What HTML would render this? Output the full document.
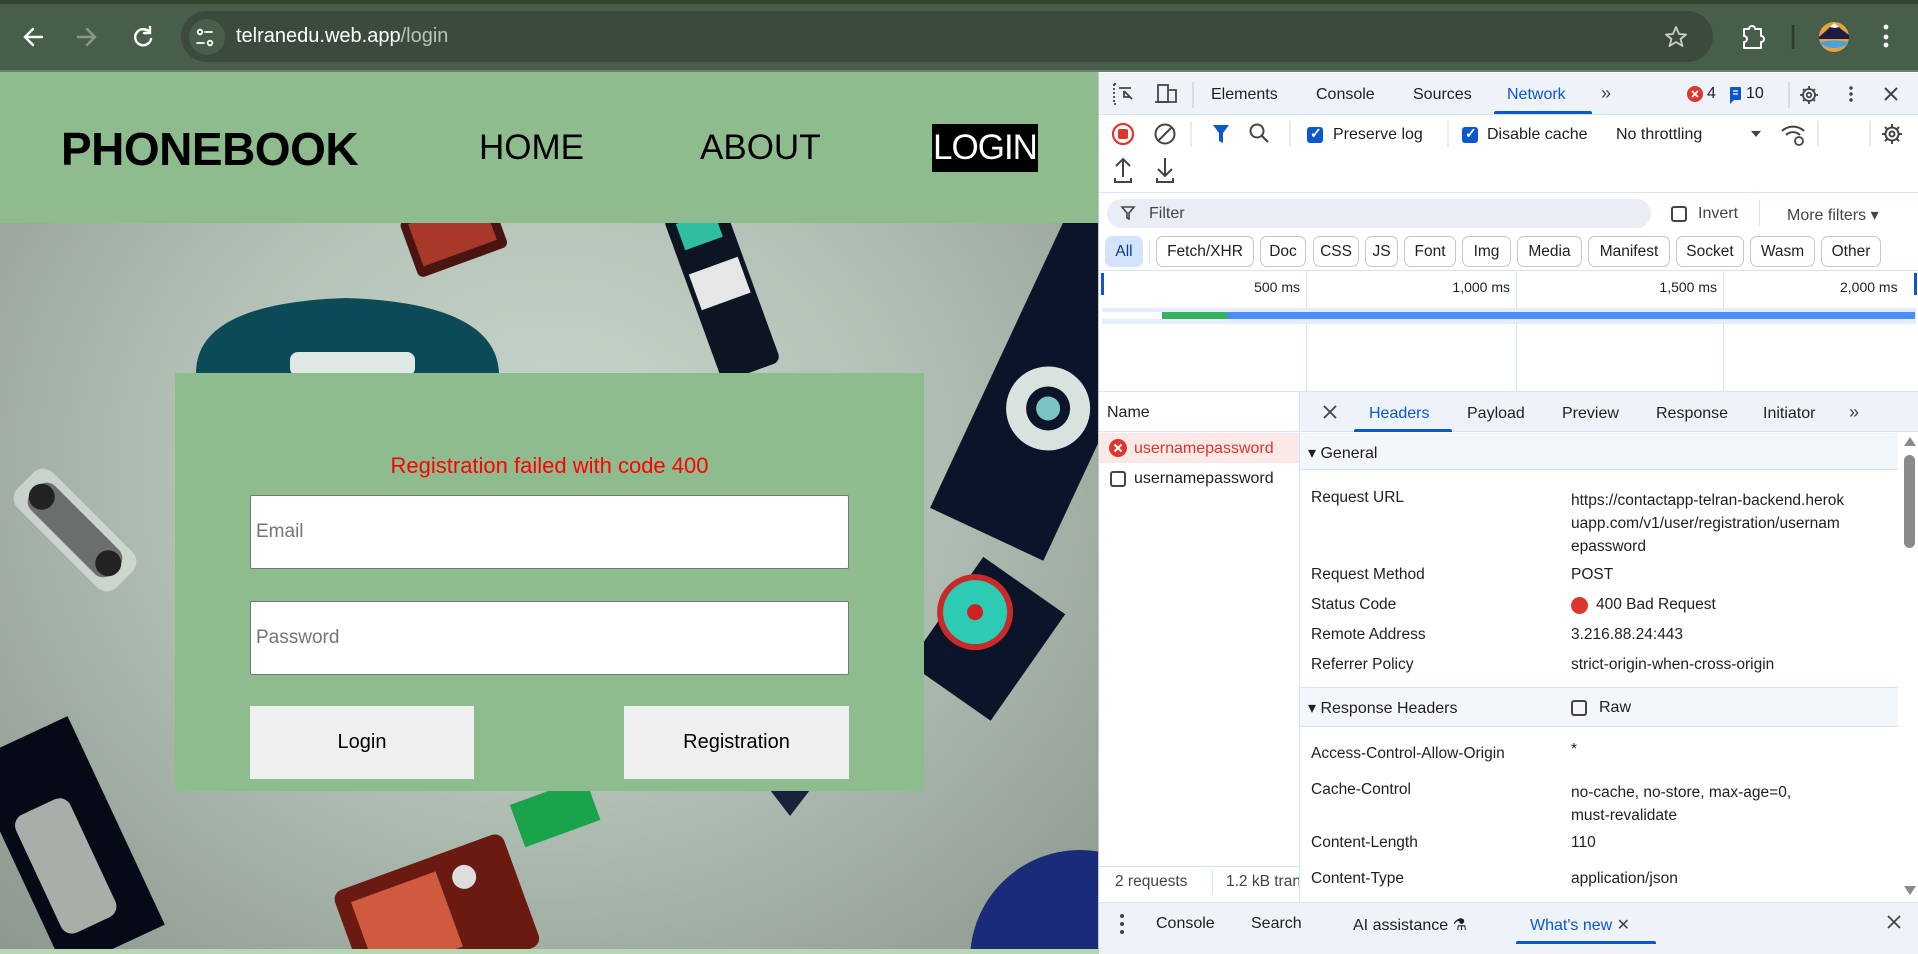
<!DOCTYPE html>
<html><head><meta charset="utf-8"><style>
*{box-sizing:border-box;margin:0;padding:0}
html{width:1918px;height:954px;overflow:hidden}
body{width:1918px;height:954px;overflow:hidden;position:relative;font-family:"Liberation Sans",sans-serif;background:#fff}
.a{position:absolute;white-space:nowrap}
.dt{font-size:16px;color:#1f1f1f}
.lbl{font-size:15.5px;color:#1f1f1f;font-weight:500}
.val{font-size:15.5px;color:#1f1f1f}
.chip{position:absolute;top:236px;height:31px;border:1px solid #c4c7c5;border-radius:7px;font-size:15.5px;line-height:29px;text-align:center;color:#1f1f1f}
.cb{position:absolute;width:16px;height:16px;border-radius:3px}
.cbon{background:#0b57d0}
.cboff{border:2px solid #444}
</style></head><body>
<div class="a" style="left:0;top:0;width:1918px;height:72px;background:#475f4a"></div>
<div class="a" style="left:0;top:0;width:1918px;height:4px;background:#34452f"></div>
<div class="a" style="left:0;top:70px;width:1918px;height:2px;background:#6b7f6d"></div>
<div class="a" style="left:181px;top:11px;width:1532px;height:51px;border-radius:26px;background:#3b4a3d"></div>
<div class="a" style="left:189px;top:19px;width:36px;height:36px;border-radius:18px;background:#475f4a"></div>
<svg class="a" style="left:0;top:0" width="1918" height="72">
<g stroke="#fff" stroke-width="2.4" fill="none" stroke-linecap="round">
<path d="M42 37H25M33 29l-8 8 8 8"/>
<path d="M78 37h17M87 29l8 8-8 8" stroke="#8a9a8c"/>
<path d="M150 33a8 8 0 1 0 1 6M150 27v6h-6"/>
<circle cx="200" cy="32" r="2.3" stroke-width="1.8"/><path d="M205 32h7M197 43h7" stroke-width="1.8"/><circle cx="210" cy="43" r="2.3" stroke-width="1.8"/>
<path d="M1676 27l3 7 7 .5-5.5 4.5 2 7-6.5-4-6.5 4 2-7-5.5-4.5 7-.5z" stroke="#c8d0c9" stroke-width="1.8" stroke-linejoin="round"/>
<path d="M1744 29h5a3 3 0 0 1 6 0h6v7a3 3 0 0 1 0 6v6h-17v-6a3 3 0 0 0 0-6z" stroke-width="2" stroke-linejoin="round"/>
</g>
<path d="M1793 25v24" stroke="#2c3a2d" stroke-width="2.5"/>
<circle cx="1834" cy="37" r="15" fill="#e9a23b"/><path d="M1819 37l9-8 6-6 7 6 8 6v4h-30z" fill="#1c1d45"/><path d="M1830 27l4-4 5 4-4 1z" fill="#fff"/><path d="M1820 42q14-3 28 0v2q-14 8-28 0z" fill="#4aa2dc"/>
<g fill="#fff"><circle cx="1886" cy="27" r="2.4"/><circle cx="1886" cy="37" r="2.4"/><circle cx="1886" cy="45" r="2.4"/></g>
</svg>
<div class="a" style="left:236px;top:25px;font-size:20px;color:#fff">telranedu.web.app<span style="color:#b8c2b9">/login</span></div>

<div class="a" style="left:0;top:72px;width:1098px;height:882px;overflow:hidden;background:radial-gradient(ellipse at 50% 45%,#c9d7cc 0%,#b3c1b6 45%,#8c978e 100%)">
 <svg class="a" style="left:0;top:0" width="1098" height="882">
  <g transform="translate(0,-72)">
  <g transform="rotate(-20 453 245)"><rect x="410" y="205" width="95" height="60" rx="6" fill="#4a1511"/><rect x="418" y="210" width="78" height="45" fill="#a8392a"/></g>
  <g transform="rotate(-20 730 300)"><rect x="695" y="200" width="62" height="175" rx="8" fill="#0d1424"/><rect x="705" y="210" width="40" height="28" fill="#2fbf9e"/><rect x="700" y="262" width="52" height="38" fill="#e6e6e6"/></g>
  <path d="M196 373q0-70 150-75q150 5 153 75z" fill="#0d4a58"/>
  <rect x="290" y="352" width="125" height="24" rx="8" fill="#dfe8e3"/>
  <g transform="rotate(25 1030 400)"><rect x="985" y="210" width="125" height="330" fill="#0b1428"/><circle cx="1050" cy="400" r="42" fill="#d8e2de"/><circle cx="1050" cy="400" r="22" fill="#0b1428"/><circle cx="1050" cy="400" r="12" fill="#7ac4c4"/></g>
  <g transform="rotate(35 980 640)"><rect x="935" y="570" width="100" height="130" fill="#0b1428"/><circle cx="960" cy="620" r="38" fill="#c82a2a"/><circle cx="960" cy="620" r="32" fill="#2ecbb4"/><circle cx="960" cy="620" r="8" fill="#d02020"/></g>
  <g transform="rotate(45 75 530)"><rect x="5" y="505" width="140" height="50" rx="14" fill="#e4e7e4" opacity=".6"/><rect x="18" y="513" width="114" height="34" rx="12" fill="#6b6f6d"/><circle cx="28" cy="530" r="13" fill="#222"/><circle cx="122" cy="530" r="13" fill="#222"/></g>
  <g transform="rotate(-25 60 830)"><rect x="5" y="730" width="110" height="230" fill="#060a17"/><rect x="20" y="800" width="60" height="130" rx="12" fill="#a9aea9"/></g>
  <g transform="rotate(-20 430 900)"><rect x="340" y="860" width="180" height="120" rx="10" fill="#6b1a12"/><rect x="355" y="875" width="90" height="80" fill="#d05a40"/><circle cx="470" cy="890" r="12" fill="#ddd"/></g>
  <circle cx="1080" cy="960" r="110" fill="#1a2b7a"/>
  <g transform="rotate(-20 555 812)"><rect x="515" y="790" width="80" height="45" fill="#19a34a"/></g>
  <path d="M770 790l40 0-20 26z" fill="#16233a"/>
  </g>
 </svg>
</div>
<div class="a" style="left:0;top:72px;width:1098px;height:151px;background:#8fbc8f"></div>
<div class="a" style="left:61px;top:122px;font-size:46px;font-weight:bold;color:#000;letter-spacing:-0.5px">PHONEBOOK</div>
<div class="a" style="left:479px;top:128px;font-size:35px;color:#000">HOME</div>
<div class="a" style="left:700px;top:128px;font-size:35px;color:#000">ABOUT</div>
<div class="a" style="left:932px;top:124px;width:106px;height:48px;background:#000"></div>
<div class="a" style="left:932px;top:128px;width:106px;text-align:center;font-size:35px;color:#fff;letter-spacing:-1px">LOGIN</div>

<div class="a" style="left:175px;top:373px;width:749px;height:418px;background:#8fbc8f"></div>
<div class="a" style="left:175px;top:453px;width:749px;text-align:center;font-size:22px;color:#f00">Registration failed with code 400</div>
<div class="a" style="left:250px;top:495px;width:599px;height:74px;background:#fff;border:1px solid #767676;border-radius:2px"></div>
<div class="a" style="left:256px;top:521px;font-size:19px;color:#757575">Email</div>
<div class="a" style="left:250px;top:601px;width:599px;height:74px;background:#fff;border:1px solid #767676;border-radius:2px"></div>
<div class="a" style="left:256px;top:627px;font-size:19px;color:#757575">Password</div>
<div class="a" style="left:250px;top:706px;width:224px;height:73px;background:#efefef;text-align:center;line-height:73px;font-size:20px;color:#000">Login</div>
<div class="a" style="left:624px;top:706px;width:225px;height:73px;background:#efefef;text-align:center;line-height:73px;font-size:20px;color:#000">Registration</div>
<div class="a" style="left:0;top:949px;width:1098px;height:5px;background:#b6d7b4"></div>

<div class="a" style="left:1098px;top:72px;width:820px;height:882px;background:#fff;border-left:1px solid #c4c7c5"></div>
<div class="a" style="left:1099px;top:73px;width:819px;height:42px;background:#eef2f9;border-bottom:1px solid #d3e3fd"></div>
<div class="a dt" style="left:1211px;top:86px">Elements</div>
<div class="a dt" style="left:1316px;top:86px">Console</div>
<div class="a dt" style="left:1413px;top:86px">Sources</div>
<div class="a dt" style="left:1507px;top:86px;color:#0b57d0">Network</div>
<div class="a" style="left:1494px;top:111px;width:98px;height:3px;background:#0b57d0;border-radius:2px 2px 0 0"></div>
<div class="a dt" style="left:1601px;top:83px;font-size:18px;color:#444">»</div>
<svg class="a" style="left:1099px;top:73px" width="819" height="42">
<g stroke="#444" stroke-width="1.8" fill="none">
<path d="M15 11v20M15 11h4M15 31h4" stroke-dasharray="2 2"/><path d="M20 15l12 0M25 18l8 8M25 18v6h6" />
<rect x="59" y="12" width="10" height="17"/><path d="M56 29h14M70 17h7v12h-7"/>
<path d="M710 13v4m0 10v4m-9-9h4m10 0h4M704 16l2.5 2.5M713.5 25.5l2.5 2.5M704 28l2.5-2.5M713.5 18.5l2.5-2.5"/><circle cx="710" cy="22" r="6"/><circle cx="710" cy="22" r="2.3"/>
<path d="M752 15h0M752 21h0M752 27h0" stroke-width="3.5" stroke-linecap="round"/>
<path d="M786 15l12 12M798 15l-12 12" stroke-width="2"/>
</g>
<path d="M94 9v26" stroke="#c4c7c5"/><path d="M690 9v26" stroke="#c4c7c5"/>
<circle cx="596" cy="21" r="8" fill="#dc362e"/><path d="M593 18l6 6M599 18l-6 6" stroke="#fff" stroke-width="1.8"/>
<rect x="631" y="14" width="11" height="13" rx="1" fill="#0b57d0"/><path d="M631 27l0 4 4-4" fill="#0b57d0"/><path d="M634 18h5M634 21h5" stroke="#fff" stroke-width="1.3"/>
</svg>
<div class="a dt" style="left:1707px;top:85px">4</div>
<div class="a dt" style="left:1746px;top:85px">10</div>

<svg class="a" style="left:1099px;top:115px" width="819" height="78">
<circle cx="24" cy="19" r="10" fill="none" stroke="#dc362e" stroke-width="2.2"/><rect x="19" y="14" width="10" height="10" rx="2" fill="#dc362e"/>
<circle cx="66" cy="19" r="9.5" fill="none" stroke="#444" stroke-width="2"/><path d="M59 26l14-14" stroke="#444" stroke-width="2"/>
<path d="M114 10h16l-6 8v10l-4-2v-8z" fill="#0b57d0"/>
<circle cx="158" cy="16" r="6.5" fill="none" stroke="#444" stroke-width="2"/><path d="M163 21l6 6" stroke="#444" stroke-width="2.2"/>
<path d="M92 6v26M191 6v26M349 6v26M719 6v26M771 6v26" stroke="#d4d7dc"/>
<path d="M652 16l10 0-5 6z" fill="#444"/>
<path d="M683 16a16 16 0 0 1 22 0M687 20a10 10 0 0 1 14 0" stroke="#444" stroke-width="2" fill="none"/><circle cx="700" cy="26" r="4" fill="none" stroke="#444" stroke-width="1.8"/>
<g stroke="#444" stroke-width="2" fill="none"><circle cx="793" cy="19" r="6.5"/><circle cx="793" cy="19" r="2.5"/><path d="M793 9v3M793 26v3M783 19h3M800 19h3M786 12l2 2M798 24l2 2M786 26l2-2M798 14l2-2"/></g>
<g stroke="#444" stroke-width="2" fill="none"><path d="M24 62v-17M17 51l7-7 7 7M16 63v4h16v-4"/><path d="M66 43v17M59 54l7 7 7-7M58 63v4h16v-4"/></g>
</svg>
<div class="cb cbon" style="left:1307px;top:127px"></div><div class="a" style="left:1310px;top:125px;color:#fff;font-size:14px;font-weight:bold">✓</div>
<div class="a dt" style="left:1333px;top:126px">Preserve log</div>
<div class="cb cbon" style="left:1462px;top:127px"></div><div class="a" style="left:1465px;top:125px;color:#fff;font-size:14px;font-weight:bold">✓</div>
<div class="a dt" style="left:1487px;top:126px">Disable cache</div>
<div class="a dt" style="left:1616px;top:126px">No throttling</div>
<div class="a" style="left:1099px;top:192px;width:819px;height:1px;background:#d3e3fd"></div>

<div class="a" style="left:1107px;top:199px;width:544px;height:29px;border-radius:15px;background:#e9eef6"></div>
<svg class="a" style="left:1120px;top:205px" width="16" height="16"><path d="M2 2h12l-5 6v6l-2-1v-5z" fill="none" stroke="#444" stroke-width="1.6"/></svg>
<div class="a dt" style="left:1149px;top:205px;color:#444">Filter</div>
<div class="cb cboff" style="left:1671px;top:206px"></div>
<div class="a dt" style="left:1698px;top:205px;color:#444">Invert</div>
<div class="a" style="left:1759px;top:200px;width:1px;height:26px;background:#d3e3fd"></div>
<div class="a dt" style="left:1787px;top:205px;color:#444">More filters ▾</div>

<div class="chip" style="left:1105px;width:38px;background:#d3e3fd;border-color:#d3e3fd;color:#0b3b8c">All</div>
<div class="a" style="left:1149px;top:241px;width:1px;height:22px;background:#d3e3fd"></div>
<div class="chip" style="left:1156px;width:98px">Fetch/XHR</div>
<div class="chip" style="left:1260px;width:46px">Doc</div>
<div class="chip" style="left:1313px;width:46px">CSS</div>
<div class="chip" style="left:1365px;width:33px">JS</div>
<div class="chip" style="left:1404px;width:52px">Font</div>
<div class="chip" style="left:1462px;width:49px">Img</div>
<div class="chip" style="left:1517px;width:65px">Media</div>
<div class="chip" style="left:1588px;width:82px">Manifest</div>
<div class="chip" style="left:1676px;width:68px">Socket</div>
<div class="chip" style="left:1750px;width:65px">Wasm</div>
<div class="chip" style="left:1821px;width:60px">Other</div>

<div class="a" style="left:1099px;top:270px;width:819px;height:1px;background:#d3e3fd"></div>
<div class="a" style="left:1306px;top:271px;width:1px;height:120px;background:#d3e3fd"></div>
<div class="a" style="left:1516px;top:271px;width:1px;height:120px;background:#d3e3fd"></div>
<div class="a" style="left:1723px;top:271px;width:1px;height:120px;background:#d3e3fd"></div>
<div class="a" style="left:1101px;top:273px;width:3px;height:22px;background:#0b57d0"></div>
<div class="a" style="left:1914px;top:273px;width:3px;height:22px;background:#0b57d0"></div>
<div class="a" style="left:1200px;top:279px;width:100px;text-align:right;font-size:14px;color:#1f1f1f">500 ms</div>
<div class="a" style="left:1410px;top:279px;width:100px;text-align:right;font-size:14px;color:#1f1f1f">1,000 ms</div>
<div class="a" style="left:1617px;top:279px;width:100px;text-align:right;font-size:14px;color:#1f1f1f">1,500 ms</div>
<div class="a" style="left:1840px;top:279px;width:65px;overflow:hidden;font-size:14px;color:#1f1f1f">2,000 ms</div>
<div class="a" style="left:1102px;top:308px;width:814px;height:16px;background:#e3ecfb"></div>
<div class="a" style="left:1102px;top:312px;width:60px;height:7px;background:#fff"></div>
<div class="a" style="left:1162px;top:312px;width:65px;height:7px;background:#34b35a"></div>
<div class="a" style="left:1227px;top:312px;width:688px;height:7px;background:#4c8bf5"></div>
<div class="a" style="left:1099px;top:391px;width:819px;height:1px;background:#d3e3fd"></div>

<div class="a" style="left:1299px;top:392px;width:1px;height:510px;background:#d3e3fd"></div>
<div class="a" style="left:1099px;top:392px;width:200px;height:40px;background:#fff;border-bottom:1px solid #d3e3fd"></div>
<div class="a dt" style="left:1107px;top:404px">Name</div>
<div class="a" style="left:1099px;top:433px;width:200px;height:30px;background:#fce8e6"></div>
<svg class="a" style="left:1108px;top:438px" width="20" height="20"><circle cx="10" cy="10" r="9" fill="#dc362e"/><path d="M6.5 6.5l7 7M13.5 6.5l-7 7" stroke="#fff" stroke-width="2"/></svg>
<div class="a dt" style="left:1134px;top:440px;color:#dc362e">usernamepassword</div>
<div class="cb cboff" style="left:1110px;top:471px"></div>
<div class="a dt" style="left:1134px;top:470px">usernamepassword</div>
<div class="a" style="left:1099px;top:866px;width:200px;height:1px;background:#d3e3fd"></div>
<div class="a" style="left:1115px;top:873px;font-size:15.5px;color:#444">2 requests</div>
<div class="a" style="left:1212px;top:870px;width:1px;height:24px;background:#d3e3fd"></div>
<div class="a" style="left:1226px;top:873px;width:73px;overflow:hidden;font-size:15.5px;color:#444">1.2 kB transferred</div>

<div class="a" style="left:1300px;top:392px;width:618px;height:40px;background:#eef2f9;border-bottom:1px solid #d3e3fd"></div>
<svg class="a" style="left:1322px;top:404px" width="16" height="16"><path d="M2 2l12 12M14 2l-12 12" stroke="#444" stroke-width="1.8"/></svg>
<div class="a dt" style="left:1369px;top:405px;color:#0b57d0">Headers</div>
<div class="a" style="left:1354px;top:429px;width:98px;height:3px;background:#0b57d0;border-radius:2px 2px 0 0"></div>
<div class="a dt" style="left:1467px;top:405px">Payload</div>
<div class="a dt" style="left:1562px;top:405px">Preview</div>
<div class="a dt" style="left:1656px;top:405px">Response</div>
<div class="a dt" style="left:1763px;top:405px">Initiator</div>
<div class="a dt" style="left:1849px;top:402px;font-size:18px;color:#444">»</div>

<div class="a" style="left:1300px;top:433px;width:598px;height:37px;background:#f3f6fb;border-bottom:1px solid #d3e3fd"></div>
<div class="a dt" style="left:1308px;top:443px">▾ General</div>
<div class="a lbl" style="left:1311px;top:489px">Request URL</div>
<div class="a val" style="left:1571px;top:489px;line-height:23px">https://contactapp-telran-backend.herok<br>uapp.com/v1/user/registration/usernam<br>epassword</div>
<div class="a lbl" style="left:1311px;top:566px">Request Method</div><div class="a val" style="left:1571px;top:566px">POST</div>
<div class="a lbl" style="left:1311px;top:596px">Status Code</div>
<div class="a" style="left:1571px;top:597px;width:17px;height:17px;border-radius:9px;background:#dc362e"></div>
<div class="a val" style="left:1596px;top:596px">400 Bad Request</div>
<div class="a lbl" style="left:1311px;top:626px">Remote Address</div><div class="a val" style="left:1571px;top:626px">3.216.88.24:443</div>
<div class="a lbl" style="left:1311px;top:656px">Referrer Policy</div><div class="a val" style="left:1571px;top:656px">strict-origin-when-cross-origin</div>
<div class="a" style="left:1300px;top:687px;width:598px;height:40px;background:#f3f6fb;border-top:1px solid #d3e3fd;border-bottom:1px solid #d3e3fd"></div>
<div class="a dt" style="left:1308px;top:698px">▾ Response Headers</div>
<div class="cb cboff" style="left:1571px;top:700px"></div>
<div class="a dt" style="left:1599px;top:699px">Raw</div>
<div class="a lbl" style="left:1311px;top:745px">Access-Control-Allow-Origin</div><div class="a val" style="left:1571px;top:741px">*</div>
<div class="a lbl" style="left:1311px;top:781px">Cache-Control</div><div class="a val" style="left:1571px;top:781px;line-height:23px">no-cache, no-store, max-age=0,<br>must-revalidate</div>
<div class="a lbl" style="left:1311px;top:834px">Content-Length</div><div class="a val" style="left:1571px;top:834px">110</div>
<div class="a lbl" style="left:1311px;top:870px">Content-Type</div><div class="a val" style="left:1571px;top:870px">application/json</div>
<div class="a" style="left:1900px;top:432px;width:18px;height:470px;background:#fff"></div>
<div class="a" style="left:1904px;top:437px;width:0;height:0;border-left:6px solid transparent;border-right:6px solid transparent;border-bottom:9px solid #8a8a8a"></div>
<div class="a" style="left:1904px;top:455px;width:11px;height:93px;border-radius:6px;background:#8a8a8a"></div>
<div class="a" style="left:1904px;top:886px;width:0;height:0;border-left:6px solid transparent;border-right:6px solid transparent;border-top:9px solid #8a8a8a"></div>

<div class="a" style="left:1099px;top:902px;width:819px;height:44px;background:#eef2f9;border-top:1px solid #d3e3fd"></div>
<svg class="a" style="left:1118px;top:912px" width="10" height="24"><g fill="#444"><circle cx="4" cy="4" r="2"/><circle cx="4" cy="12" r="2"/><circle cx="4" cy="20" r="2"/></g></svg>
<div class="a dt" style="left:1156px;top:915px">Console</div>
<div class="a dt" style="left:1251px;top:915px">Search</div>
<div class="a dt" style="left:1353px;top:915px">AI assistance ⚗</div>
<div class="a dt" style="left:1530px;top:915px;color:#0b57d0">What's new <span style="color:#444">✕</span></div>
<div class="a" style="left:1516px;top:941px;width:140px;height:3px;background:#0b57d0;border-radius:2px 2px 0 0"></div>
<svg class="a" style="left:1886px;top:914px" width="16" height="16"><path d="M2 2l12 12M14 2l-12 12" stroke="#444" stroke-width="1.8"/></svg>
<div class="a" style="left:1099px;top:946px;width:819px;height:8px;background:#eef2f9"></div>
</body></html>
